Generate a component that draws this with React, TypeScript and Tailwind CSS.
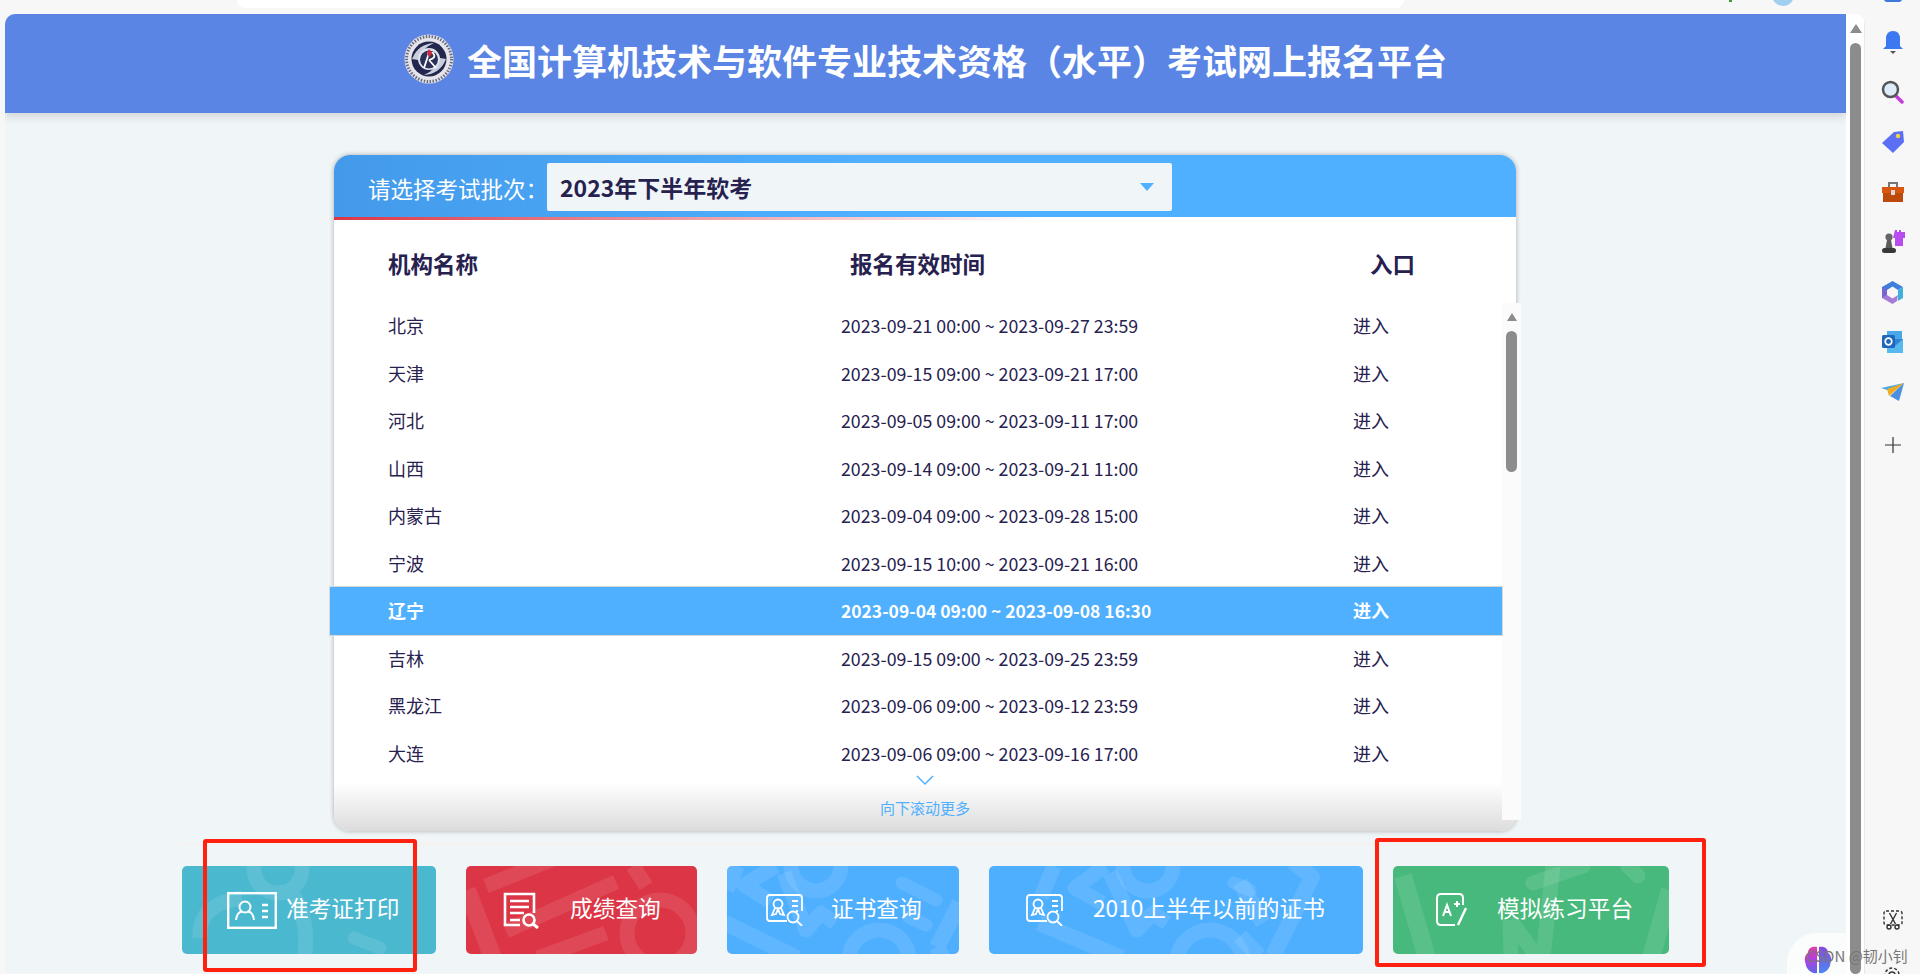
import React from "react";

const rows: [string, string][] = [
  ["北京", "2023-09-21 00:00 ~ 2023-09-27 23:59"],
  ["天津", "2023-09-15 09:00 ~ 2023-09-21 17:00"],
  ["河北", "2023-09-05 09:00 ~ 2023-09-11 17:00"],
  ["山西", "2023-09-14 09:00 ~ 2023-09-21 11:00"],
  ["内蒙古", "2023-09-04 09:00 ~ 2023-09-28 15:00"],
  ["宁波", "2023-09-15 10:00 ~ 2023-09-21 16:00"],
  ["辽宁", "2023-09-04 09:00 ~ 2023-09-08 16:30"],
  ["吉林", "2023-09-15 09:00 ~ 2023-09-25 23:59"],
  ["黑龙江", "2023-09-06 09:00 ~ 2023-09-12 23:59"],
  ["大连", "2023-09-06 09:00 ~ 2023-09-16 17:00"],
];

function Logo() {
  return (
    <svg width="50" height="50" viewBox="0 0 50 50" className="shrink-0">
      <circle cx="25" cy="25" r="24.5" fill="#e4e4ea" />
      <circle cx="25" cy="25" r="22.5" fill="none" stroke="#6a6b82" strokeWidth="3" strokeDasharray="1.500 1.500" />
      <circle cx="25" cy="25" r="17.5" fill="#23264d" />
      <path d="M8 25 Q14 10 30 9 Q18 14 14 26z" fill="#c9cede" />
      <path d="M42 25 Q36 40 20 41 Q32 36 36 24z" fill="#c9cede" />
      <circle cx="25" cy="25" r="11" fill="#dfe3ee" />
      <circle cx="25" cy="25.500" r="9" fill="#2b3058" />
      <path d="M20 34 L25 19 M25 26 L32 34 M25 26 Q33 24 29 19 L23 19" fill="none" stroke="#fff" strokeWidth="1.800" />
      <path d="M25 15 l3.500 4.500 -3.500 4 -2 -5z" fill="#c9283e" />
    </svg>
  );
}

function Watermark({ kind, width }: { kind: number; width: number }) {
  const c = { fill: "none", stroke: "#fff", strokeOpacity: 0.1, strokeWidth: 15 } as const;
  return (
    <svg className="absolute inset-0 pointer-events-none" width={width} height="88" viewBox={`0 0 ${width} 88`}>
      {kind === 0 && (
        <g {...c}>
          <circle cx="96" cy="3" r="24" />
          <path d="M60 32 Q15 38 18 72 M112 30 Q128 55 122 95" />
          <path d="M172 72 L198 82" strokeWidth="13" strokeLinecap="round" />
        </g>
      )}
      {kind === 1 && (
        <g {...c}>
          <path d="M20 20 L90 -8 M40 65 L150 16 M72 92 L140 67 M167 0 L180 20" />
          <path d="M1 24 L27 92" strokeWidth="18" />
          <circle cx="194" cy="67" r="33" />
        </g>
      )}
      {kind === 2 && (
        <g {...c}>
          <circle cx="89" cy="0" r="25" />
          <path d="M49 0 L17 19 L44 36 M10 0 L0 24 M57 7 L79 64 L94 47 L108 57" strokeLinejoin="round" />
          <path d="M-2 57 L70 92 M210 81 L233 37 M210 81 L216 92" strokeWidth="16" />
          <path d="M175 17 L209 34 M182 51 L199 59" strokeWidth="13" strokeLinecap="round" />
          <circle cx="152" cy="94" r="30" />
        </g>
      )}
      {kind === 3 && (
        <g {...c}>
          <circle cx="159" cy="0" r="25" />
          <path d="M116 0 L86 22 L113 37 M65 0 L52 31 M121 7 L148 64 L164 47 L178 57" strokeLinejoin="round" />
          <path d="M50 57 L133 92 M304 -4 L323 11 L284 90 M251 16 L274 57 M251 70 L270 90" strokeWidth="16" strokeLinejoin="round" />
          <path d="M245 17 L261 24" strokeWidth="13" strokeLinecap="round" />
          <circle cx="221" cy="97" r="33" />
        </g>
      )}
      {kind === 4 && (
        <g {...c}>
          <path d="M10 10 L34 92 M277 24 L258 92" strokeWidth="18" />
          <path d="M140 17 L190 0 M235 0 L245 10" strokeLinecap="round" />
          <path d="M160 0 L150 92 M117 54 L145 92 M117 54 L118 92" />
        </g>
      )}
    </svg>
  );
}

function IdCard() {
  return (
    <svg width="50" height="37" viewBox="0 0 50 37" fill="none" stroke="#fff" className="shrink-0">
      <rect x="1.200" y="1.200" width="47.600" height="34.600" strokeWidth="2.400" />
      <circle cx="18" cy="15" r="5.500" strokeWidth="2" />
      <path d="M9 28 Q10 20 15 19.500 M27 28 Q26 20 21 19.500" strokeWidth="2" />
      <path d="M35 13h6M35 19h6M35 25h6" strokeWidth="2.400" />
    </svg>
  );
}

function ScoreIcon() {
  return (
    <svg width="38" height="37" viewBox="0 0 38 37" fill="none" stroke="#fff" className="shrink-0">
      <path d="M31 21V2H2v31h15" strokeWidth="2.600" />
      <path d="M7 9h19M7 15h19M7 21h14M7 28h10" strokeWidth="2.400" />
      <circle cx="26" cy="28" r="5.500" strokeWidth="2.600" />
      <path d="M30 32l5 4" strokeWidth="3" />
    </svg>
  );
}

function CertIcon() {
  return (
    <svg width="38" height="32" viewBox="0 0 38 32" fill="none" stroke="#fff" strokeWidth="1.800" className="shrink-0">
      <path d="M21 27H4q-3 0-3-3V4q0-3 3-3h29q3 0 3 3v13" />
      <circle cx="12" cy="10" r="4.500" />
      <path d="M9 14l-3 7 4-1 2-5 2 5 4 1-3-7" />
      <path d="M26 7h6M26 12h6M30 17h2" />
      <circle cx="27" cy="23" r="5.500" />
      <path d="M31 27l5 5" />
    </svg>
  );
}

function PracticeIcon() {
  return (
    <svg width="32" height="34" viewBox="0 0 32 34" fill="none" stroke="#fff" strokeWidth="2" className="shrink-0">
      <path d="M19 32H5q-4 0-4-4V5q0-4 4-4h18q4 0 4 4v7" />
      <path d="M7 23l4-11 4 11M8.500 19h5" />
      <path d="M18 11h6M21 8v6" />
      <path d="M22 32l8-17" strokeWidth="2.400" />
    </svg>
  );
}

function SideIcons() {
  return (
    <>
      <div className="h-[50px] flex items-center justify-center">
        <svg width="22" height="24" viewBox="0 0 22 24">
          <path d="M11 1q7 0 7 8v7l3 3H1l3-3V9q0-8 7-8z" fill="#3c78f0" />
          <path d="M8 21h6l-3 3z" fill="#555" />
        </svg>
      </div>
      <div className="h-[50px] flex items-center justify-center">
        <svg width="24" height="24" viewBox="0 0 24 24">
          <path d="M14 15l7 7" stroke="#c43ce0" strokeWidth="3.500" strokeLinecap="round" />
          <circle cx="9.500" cy="9.500" r="7.500" fill="#dcecf8" stroke="#555" strokeWidth="2.500" />
        </svg>
      </div>
      <div className="h-[50px] flex items-center justify-center">
        <svg width="24" height="24" viewBox="0 0 24 24">
          <path d="M1 13L13 2l9-1 1 11-11 11z" fill="#5b6ff5" />
          <circle cx="17" cy="6" r="2.200" fill="#f5d33c" />
        </svg>
      </div>
      <div className="h-[50px] flex items-center justify-center">
        <svg width="24" height="24" viewBox="0 0 24 24">
          <path d="M8 7V3h8v4" fill="none" stroke="#777" strokeWidth="2" />
          <rect x="1" y="7" width="22" height="6" fill="#d9560f" />
          <rect x="2" y="13" width="20" height="9" fill="#bd4a0c" />
          <rect x="10" y="10" width="4" height="5" fill="#d8d8d8" />
        </svg>
      </div>
      <div className="h-[50px] flex items-center justify-center">
        <svg width="24" height="24" viewBox="0 0 24 24">
          <path d="M14 0h2v2h2V0h2v2h2v0h2v6h-2v8h-8V8h-2z" fill="#b94cf0" />
          <circle cx="8" cy="7" r="3.600" fill="#666" />
          <path d="M6 10h4l1.500 8h-7z" fill="#5c5c5c" />
          <rect x="1" y="18" width="14" height="5" rx="2.500" fill="#383838" />
        </svg>
      </div>
      <div className="h-[50px] flex items-center justify-center">
        <svg width="21" height="23" viewBox="0 0 21 23">
          <path d="M10.500 0L21 6 16 9l-5.500-3.500L5 9v5l-5 3V6z" fill="#3f7fdc" />
          <path d="M0 17l5-3 5.500 3.500L16 14l-1 6-4.500 3z" fill="#a87ad8" />
          <path d="M21 6v11l-5 3v-6l0-5z" fill="#3fb0dc" />
          <path d="M0 6l5 3v5l-5 3z" fill="#7a66d0" />
        </svg>
      </div>
      <div className="h-[50px] flex items-center justify-center">
        <svg width="22" height="22" viewBox="0 0 22 22">
          <rect x="5" y="0" width="15" height="8" fill="#4aa8e8" />
          <path d="M5 8h16v14H5z" fill="#58b8f0" />
          <path d="M5 8l8 7 8-7" fill="#2e86d0" />
          <rect x="0" y="4" width="13" height="13" rx="1.500" fill="#1f66bd" />
          <circle cx="6.500" cy="10.500" r="3.300" fill="none" stroke="#fff" strokeWidth="1.700" />
        </svg>
      </div>
      <div className="h-[50px] flex items-center justify-center">
        <svg width="24" height="18" viewBox="0 0 24 18">
          <path d="M0 5L23 0 12 9z" fill="#4aa8e8" />
          <path d="M6 6L23 0 8 13z" fill="#f2ab1c" />
          <path d="M9 13L23 0l-5 18z" fill="#4a8fe0" />
        </svg>
      </div>
      <div className="h-[50px] mt-[3px] flex items-center justify-center">
        <svg width="16" height="16" viewBox="0 0 16 16" fill="none" stroke="#333" strokeWidth="1.200">
          <path d="M0 8h16M8 0v16" />
        </svg>
      </div>
    </>
  );
}

export default function App() {
  return (
    <div className="relative w-[1920px] h-[974px] overflow-hidden flex bg-[#f7f7f7] font-['Noto_Sans_CJK_SC','Noto_Sans',sans-serif] text-[#27214f]">
      <div className="w-[1865px] flex flex-col shrink-0">
        <div className="h-[14px] shrink-0 pl-[237px]">
          <div className="w-[1167px] h-[8px] bg-white rounded-b-[14px]" />
        </div>
        <div className="flex-1 min-h-0 ml-[5px] flex rounded-t-[10px] overflow-hidden bg-white">
          <div className="w-[1841px] shrink-0 bg-[#f0f5f8] flex flex-col">
            <header className="h-[99px] shrink-0 bg-[#5a85e4] shadow-[0_3px_10px_rgba(0,0,0,0.15)] flex items-center justify-center gap-[13px] pb-[9px]">
              <Logo />
              <h1 className="text-[35px] leading-none font-bold text-white whitespace-nowrap">
                全国计算机技术与软件专业技术资格（水平）考试网上报名平台
              </h1>
            </header>

            <main className="relative ml-[329px] mt-[42px] w-[1182px] h-[676px] shrink-0 flex flex-col rounded-[16px] bg-white shadow-[0_0_5px_rgba(0,0,0,0.3)]">
              <div className="h-[62px] shrink-0 rounded-t-[16px] bg-gradient-to-r from-[#449aea] to-[#4fb0ff] to-[45%] flex items-start pt-[8px] pl-[34px]">
                <span className="w-[179px] h-[48px] leading-[50px] text-[22.500px] text-white whitespace-nowrap">请选择考试批次：</span>
                <div className="w-[625px] h-[48px] rounded-[2px] bg-[#f0f5f8] flex items-center justify-between pl-[13px] pr-[18px]">
                  <span className="text-[23px] font-bold leading-none">2023年下半年软考</span>
                  <span className="w-0 h-0 border-x-[7px] border-x-transparent border-t-[8px] border-t-[#4fb0ff]" />
                </div>
              </div>
              <div className="h-[3px] shrink-0 bg-gradient-to-r from-[#dc3545] to-transparent to-[60%]" />
              <div className="h-[82px] shrink-0 flex items-center pl-[54px] pt-[6px] text-[22.500px] font-bold whitespace-nowrap">
                <span className="w-[462px]">机构名称</span>
                <span className="w-[520px]">报名有效时间</span>
                <span>入口</span>
              </div>
              <div className="-ml-[4px] w-[1172px] shrink-0 flex flex-col">
                {rows.map(([name, time], i) => (
                  <div
                    key={name}
                    className={
                      i === 6
                        ? "h-[47.500px] flex items-center pl-[58px] bg-[#4fb0ff] text-white font-bold shadow-[0_0_0_1px_#d8d8d8] z-10 whitespace-nowrap"
                        : "h-[47.500px] flex items-center pl-[58px] whitespace-nowrap"
                    }
                  >
                    <span className="w-[453px] text-[18px]">{name}</span>
                    <span className={i === 6 ? "w-[512px] text-[17.450px]" : "w-[512px] text-[17.800px]"}>{time}</span>
                    <span className="text-[18px]">进入</span>
                  </div>
                ))}
              </div>
              <div className="flex-1 rounded-b-[16px] bg-gradient-to-b from-white from-[15%] to-[#dcdcdc] flex flex-col items-center -mt-[3px]">
                <svg width="20" height="12" viewBox="0 0 20 12" fill="none" stroke="#4fb0ff" strokeWidth="1.500">
                  <path d="M2 2l8 8 8-8" />
                </svg>
                <span className="mt-[11px] text-[15px] leading-[22px] text-[#4fb0ff]">向下滚动更多</span>
              </div>
              <div className="absolute -right-[5px] top-[148px] bottom-[11px] w-[19px] bg-[#fbfbfb] flex flex-col items-center pt-[10px]">
                <span className="w-0 h-0 border-x-[5.500px] border-x-transparent border-b-[8px] border-b-[#8c8c8c]" />
                <span className="mt-[10px] w-[11px] h-[141px] rounded-full bg-[#8c8c8c]" />
              </div>
            </main>

            <div className="mt-[11px] ml-[175px] w-[1495px] h-[4px] shrink-0 bg-[#f3f3f3]" />
            <footer className="mt-[20px] ml-[177px] h-[88px] shrink-0 flex gap-[30px] text-[22.700px] text-white whitespace-nowrap">
              <div className="relative w-[254px] rounded-[5px] bg-[#4ab8cf] overflow-hidden flex items-center pl-[45px] gap-[9px]">
                <Watermark kind={0} width={254} />
                <IdCard />
                <span className="relative mb-[4px]">准考证打印</span>
              </div>
              <div className="relative w-[231px] rounded-[5px] bg-[#dc3545] overflow-hidden flex items-center pl-[37px] gap-[29px]">
                <Watermark kind={1} width={231} />
                <ScoreIcon />
                <span className="relative mb-[4px]">成绩查询</span>
              </div>
              <div className="relative w-[232px] rounded-[5px] bg-[#4fafff] overflow-hidden flex items-center pl-[39px] gap-[27px]">
                <Watermark kind={2} width={232} />
                <CertIcon />
                <span className="relative mb-[4px]">证书查询</span>
              </div>
              <div className="relative w-[374px] rounded-[5px] bg-[#4fafff] overflow-hidden flex items-center pl-[37px] gap-[29px]">
                <Watermark kind={3} width={374} />
                <CertIcon />
                <span className="relative mb-[4px]">2010上半年以前的证书</span>
              </div>
              <div className="relative w-[276px] rounded-[5px] bg-[#48b97c] overflow-hidden flex items-center pl-[43px] gap-[29px]">
                <Watermark kind={4} width={276} />
                <PracticeIcon />
                <span className="relative mb-[4px]">模拟练习平台</span>
              </div>
            </footer>
          </div>
          <div className="w-[19px] shrink-0 bg-white flex flex-col items-center pl-[1px] pt-[10px] border-r border-[#e8e8e8]">
            <span className="w-0 h-0 border-x-[6px] border-x-transparent border-b-[9px] border-b-[#8c8c8c]" />
            <span className="mt-[10px] w-[11px] flex-1 rounded-full bg-[#8c8c8c]" />
          </div>
        </div>
      </div>

      <aside className="w-[55px] shrink-0 flex flex-col pt-[17px]">
        <SideIcons />
        <div className="mt-[438px] h-[24px] flex items-center justify-center">
          <svg width="20" height="20" viewBox="0 0 20 20" fill="none" stroke="#333" strokeWidth="1.400">
            <rect x="1" y="1" width="18" height="14" rx="2" strokeDasharray="3 2" />
            <path d="M6.500 3l6 11M13.500 3l-6 11" />
            <circle cx="6" cy="17" r="2" />
            <circle cx="14" cy="17" r="2" />
          </svg>
        </div>
      </aside>

      {/* Annotation boxes and floating items that sit over the page */}
      <div className="absolute left-[203px] top-[839px] w-[214px] h-[133px] border-[4px] border-[#ff2010] rounded-[3px]" />
      <div className="absolute left-[1375px] top-[838px] w-[331px] h-[129px] border-[4px] border-[#ff2010] rounded-[3px]" />
      <div className="absolute left-[1787px] top-[933px] w-[60px] h-[41px] bg-[#fbfcfc] rounded-tl-[30px]">
        <svg width="28" height="28" viewBox="0 0 28 28" className="ml-[17px] mt-[13px]">
          <defs>
            <linearGradient id="brainLeft" x1="0" y1="0" x2="0" y2="1">
              <stop offset="0" stopColor="#e0409c" />
              <stop offset="0.5" stopColor="#b040e0" />
              <stop offset="1" stopColor="#5a68e8" />
            </linearGradient>
            <linearGradient id="brainRight" x1="0" y1="0" x2="0" y2="1">
              <stop offset="0" stopColor="#8a48e0" />
              <stop offset="1" stopColor="#4a88f0" />
            </linearGradient>
          </defs>
          <path d="M13 1C7 0 4 3 4 7 1 9 0 13 1.500 17 2 23 7 28 13 27z" fill="url(#brainLeft)" />
          <path d="M15 1c6-1 9 2 9 6 3 2 4 6 2.500 10C26 23 21 28 15 27z" fill="url(#brainRight)" />
        </svg>
      </div>
      <div className="absolute left-[1806px] top-[945px] text-[15px] leading-[22px] text-[#777] whitespace-nowrap">CSDN @韧小钊</div>
      <svg className="absolute left-[1883px] top-[966px]" width="18" height="18" viewBox="0 0 18 18" fill="none" stroke="#333" strokeWidth="1.500">
        <circle cx="9" cy="9" r="7" strokeDasharray="3 2" />
        <circle cx="9" cy="9" r="3" />
      </svg>
      <span className="absolute left-[1729px] top-0 w-[3px] h-[2px] bg-[#3a9a3a]" />
      <span className="absolute left-[1772px] -top-[16px] w-[22px] h-[22px] rounded-full bg-[#9fd0f0]" />
      <span className="absolute left-[1884px] -top-[8px] w-[18px] h-[10px] rounded-[3px] bg-[#3c78d8]" />
    </div>
  );
}
